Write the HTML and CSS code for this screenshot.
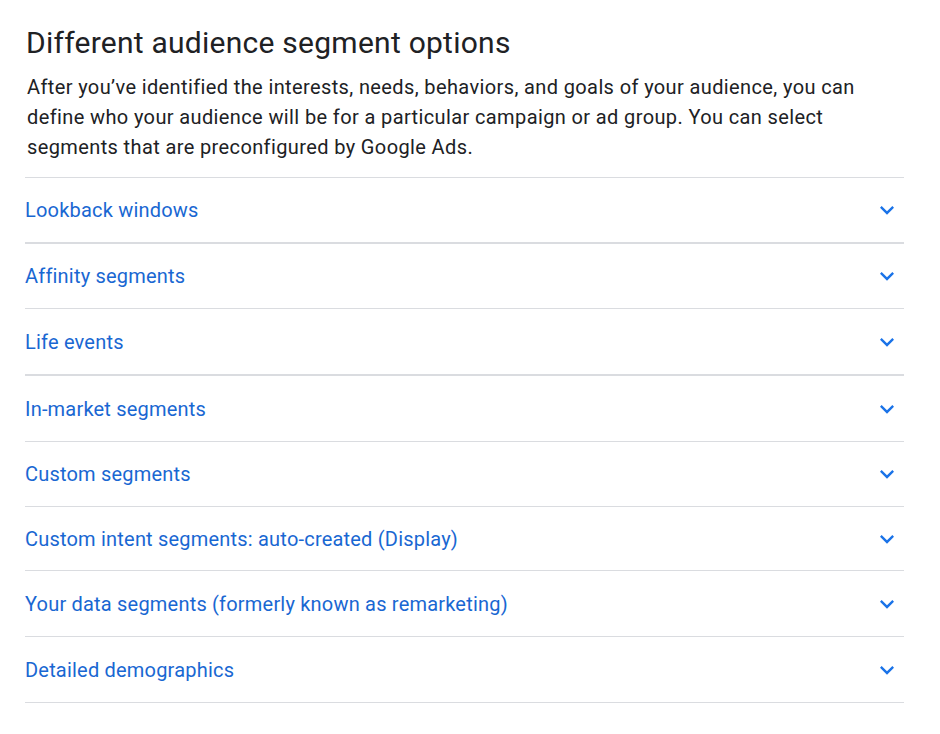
FILE: index.html
```html
<!DOCTYPE html>
<html>
<head>
<meta charset="utf-8">
<link rel="stylesheet" href="styles.css">
</head>
<body>
<div class="page">
  <h2 class="title">Different audience segment options</h2>
  <p class="intro">After you’ve identified the interests, needs, behaviors, and goals of your audience, you can define who your audience will be for a particular campaign or ad group. You can select segments that are preconfigured by Google Ads.</p>
  <div class="list">
    <div class="row thick"><span class="label">Lookback windows</span><svg class="chev" viewBox="0 0 24 24"><path d="M7.41 8.59L12 13.17l4.59-4.58L18 10l-6 6-6-6z"/></svg></div>
    <div class="row short"><span class="label">Affinity segments</span><svg class="chev" viewBox="0 0 24 24"><path d="M7.41 8.59L12 13.17l4.59-4.58L18 10l-6 6-6-6z"/></svg></div>
    <div class="row thick tall"><span class="label">Life events</span><svg class="chev" viewBox="0 0 24 24"><path d="M7.41 8.59L12 13.17l4.59-4.58L18 10l-6 6-6-6z"/></svg></div>
    <div class="row"><span class="label">In-market segments</span><svg class="chev" viewBox="0 0 24 24"><path d="M7.41 8.59L12 13.17l4.59-4.58L18 10l-6 6-6-6z"/></svg></div>
    <div class="row short"><span class="label">Custom segments</span><svg class="chev" viewBox="0 0 24 24"><path d="M7.41 8.59L12 13.17l4.59-4.58L18 10l-6 6-6-6z"/></svg></div>
    <div class="row shorter"><span class="label">Custom intent segments: auto-created (Display)</span><svg class="chev" viewBox="0 0 24 24"><path d="M7.41 8.59L12 13.17l4.59-4.58L18 10l-6 6-6-6z"/></svg></div>
    <div class="row"><span class="label">Your data segments (formerly known as remarketing)</span><svg class="chev" viewBox="0 0 24 24"><path d="M7.41 8.59L12 13.17l4.59-4.58L18 10l-6 6-6-6z"/></svg></div>
    <div class="row"><span class="label">Detailed demographics</span><svg class="chev" viewBox="0 0 24 24"><path d="M7.41 8.59L12 13.17l4.59-4.58L18 10l-6 6-6-6z"/></svg></div>
  </div>
</div>
</body>
</html>
```

FILE: styles.css
```css
html, body { margin: 0; padding: 0; background: #fff; }
body { font-family: Roboto, "Open Sans", Arial, sans-serif; color: #202124; }
.page { padding: 25px 36px 0 25px; width: 879px; }
.title { margin: 0 0 0 1px; font-size: 30px; font-weight: 400; line-height: 36px; color: #202124; letter-spacing: 0.25px; }
.intro { margin: 11px 0 15px 2px; width: 850px; font-size: 20px; line-height: 30px; color: #202124; letter-spacing: 0.38px; }
.list { border-top: 1px solid #dadce0; }
.row { display: flex; align-items: center; justify-content: space-between; height: 65px; border-bottom: 1px solid #dadce0; }
.row.thick { height: 64px; border-bottom-width: 2px; }
.row.thick.tall { height: 65px; }
.row.short { height: 64px; }
.row.shorter { height: 63px; }
.label { font-size: 20px; color: #1967d2; letter-spacing: 0.2px; }
.chev { width: 28px; height: 28px; fill: #1a73e8; margin-right: 3px; }
```
